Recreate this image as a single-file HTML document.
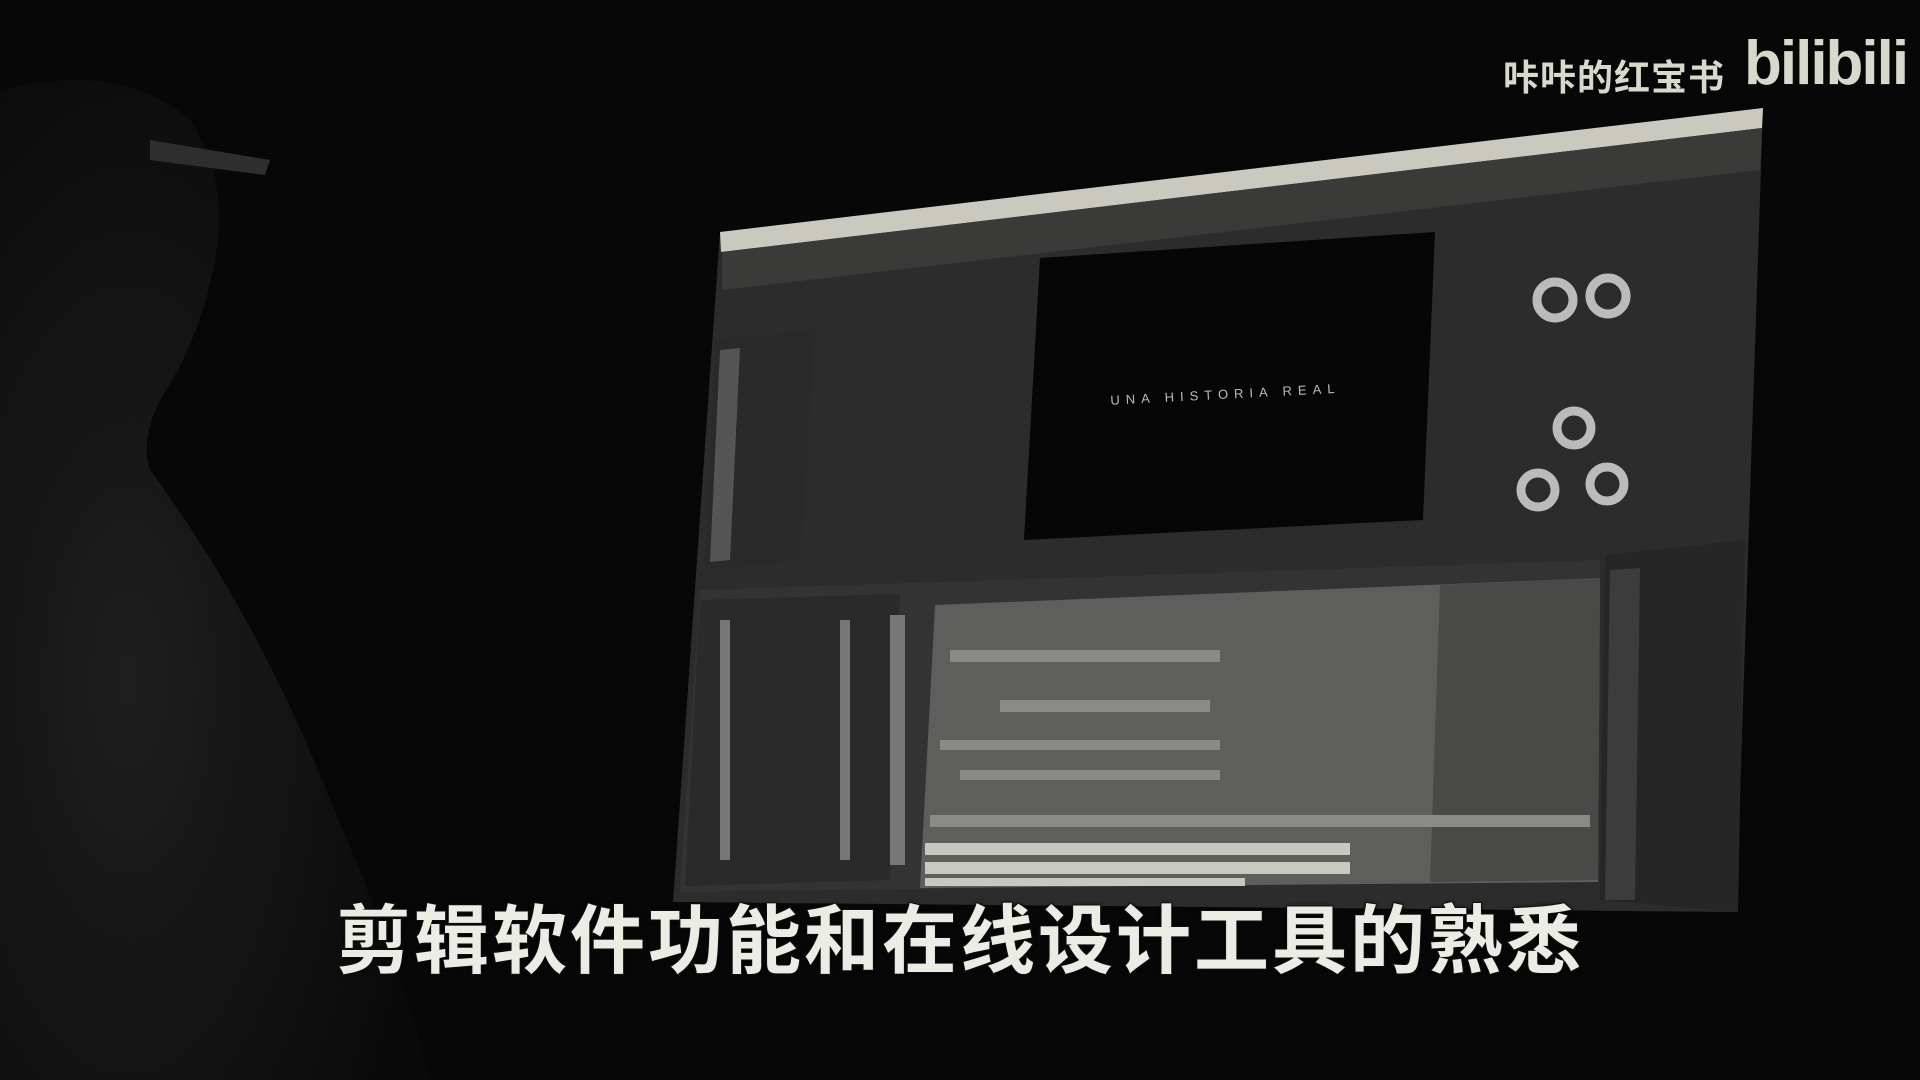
<!DOCTYPE html>
<html><head><meta charset="utf-8"><style>
html,body{margin:0;padding:0;background:#070707;width:1920px;height:1080px;overflow:hidden;position:relative}
.wm{position:absolute;left:1503px;top:49px;font:bold 36px "Liberation Sans","Noto Sans CJK SC",sans-serif;color:#d8d8cc;letter-spacing:1px}
.bl{position:absolute;left:1744px;top:28px;font:bold 62px "Liberation Sans",sans-serif;color:#d8d8cc;letter-spacing:-2px}
.sub{position:absolute;left:0;width:1920px;top:880px;text-align:center;font:bold 75px "Liberation Sans","Noto Sans CJK SC",sans-serif;color:#ecece4;letter-spacing:3px;-webkit-text-stroke:2px #1a1a1a;paint-order:stroke fill;text-shadow:0 0 4px #000}
</style></head><body>
<svg width="1920" height="1080" style="position:absolute;left:0;top:0">
<defs>
<radialGradient id="p" cx="0.3" cy="0.6" r="0.7"><stop offset="0" stop-color="#1e1e1e"/><stop offset="1" stop-color="#0a0a0a"/></radialGradient>
</defs>
<path d="M0 90 Q120 60 190 120 Q230 180 215 260 Q200 340 160 400 Q140 440 150 470 Q260 620 330 800 Q400 960 430 1080 L0 1080 Z" fill="url(#p)"/>
<path d="M150 140 L270 160 L265 175 L150 160 Z" fill="#2e2e2e"/>
<polygon points="720,232 1763,108 1736,912 673,902" fill="#2c2c2c"/>
<polygon points="720,232 1763,108 1762,128 721,252" fill="#c9c9bf"/>
<polygon points="722,252 1762,128 1760,170 722,290" fill="#3a3a38"/>
<polygon points="716,340 815,330 800,560 705,570" fill="#2a2a2a"/>
<polygon points="720,350 740,348 730,560 710,562" fill="#555"/>
<polygon points="1040,258 1435,232 1423,520 1024,540" fill="#060606"/>
<text x="1110" y="400" font-family="Liberation Sans" font-size="13" fill="#bbb" letter-spacing="6" transform="rotate(-3 1200 390)">UNA HISTORIA REAL</text>
<g fill="none" stroke="#bbb" stroke-width="9"><circle cx="1555" cy="300" r="18"/><circle cx="1608" cy="296" r="18"/><circle cx="1574" cy="428" r="17"/><circle cx="1538" cy="490" r="17"/><circle cx="1607" cy="484" r="17"/></g>
<polygon points="700,590 1600,560 1598,880 680,892" fill="#333"/>
<polygon points="935,605 1600,578 1598,882 920,888" fill="#5e5e5c"/>
<polygon points="1440,585 1600,578 1598,880 1430,882" fill="#494947"/>
<g fill="#8a8a86">
<rect x="950" y="650" width="270" height="12"/><rect x="1000" y="700" width="210" height="12"/>
<rect x="940" y="740" width="280" height="10"/><rect x="960" y="770" width="260" height="10"/>
<rect x="930" y="815" width="660" height="12"/>
</g>
<g fill="#c8c8c0"><rect x="925" y="843" width="425" height="12"/><rect x="925" y="862" width="425" height="12"/><rect x="925" y="878" width="320" height="8"/></g>
<polygon points="700,600 900,594 890,880 685,886" fill="#2a2a2a"/>
<g fill="#777"><rect x="720" y="620" width="10" height="240"/><rect x="840" y="620" width="10" height="240"/><rect x="890" y="615" width="15" height="250"/></g>
<polygon points="1605,555 1745,540 1738,912 1600,900" fill="#262626"/>
<polygon points="1610,570 1640,568 1635,900 1605,900" fill="#3c3c3c"/>
</svg>
<div class="wm">咔咔的红宝书</div>
<div class="bl">bilibili</div>
<div class="sub">剪辑软件功能和在线设计工具的熟悉</div>
</body></html>
